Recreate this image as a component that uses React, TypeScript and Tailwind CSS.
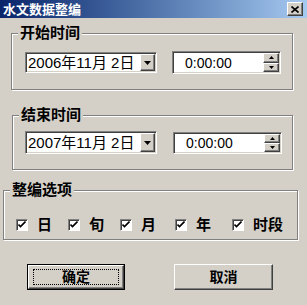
import type { ReactNode } from 'react';

const FONT = { fontFamily: '"Liberation Sans", "Noto Sans CJK SC", sans-serif' };

function Group({ label, className, children }: { label: string; className: string; children: ReactNode }) {
  return (
    <div className={`relative border border-[#808080] shadow-[inset_1px_1px_0_#fff,1px_1px_0_#fff] ${className}`}>
      {/* label sits over the etched top line */}
      <span className="absolute left-[6px] top-[-9px] bg-[#d4d0c8] px-[2px] text-[15px] font-bold leading-[16px] text-black">
        {label}
      </span>
      {children}
    </div>
  );
}

function DownArrow() {
  return (
    <svg width="7" height="4" viewBox="0 0 7 4">
      <path d="M0 0h7L3.5 4z" fill="#000" />
    </svg>
  );
}

function DateField({ value, className }: { value: string; className: string }) {
  return (
    <div
      className={`flex items-center border border-t-[#808080] border-l-[#808080] border-b-white border-r-white bg-white shadow-[inset_1px_1px_0_#404040,inset_-1px_-1px_0_#d4d0c8] ${className}`}
    >
      <span className="flex-1 pl-[2px] text-[15px] leading-none text-black">{value}</span>
      <div className="mr-[1px] flex h-[calc(100%-2px)] w-[15px] items-center justify-center border border-t-white border-l-white border-b-[#404040] border-r-[#404040] bg-[#d4d0c8] shadow-[inset_-1px_-1px_0_#808080]">
        <DownArrow />
      </div>
    </div>
  );
}

function SpinBtn({ up }: { up?: boolean }) {
  return (
    <div className="flex flex-1 items-center justify-center border border-t-white border-l-white border-b-[#404040] border-r-[#404040] bg-[#d4d0c8] shadow-[inset_-1px_-1px_0_#808080]">
      <svg width="5" height="3" viewBox="0 0 5 3">
        <path d={up ? 'M2.5 0L5 3H0z' : 'M0 0h5L2.5 3z'} fill="#000" />
      </svg>
    </div>
  );
}

function TimeField({ className }: { className: string }) {
  return (
    <div
      className={`flex items-stretch border border-t-[#808080] border-l-[#808080] border-b-white border-r-white bg-white shadow-[inset_1px_1px_0_#404040,inset_-1px_-1px_0_#d4d0c8] ${className}`}
    >
      <span className="flex flex-1 items-center pl-[12px] text-[14px] leading-none text-black">0:00:00</span>
      <div className="my-[1px] mr-[1px] flex w-[16px] flex-col">
        <SpinBtn up />
        <SpinBtn />
      </div>
    </div>
  );
}

function Check({ label }: { label: string }) {
  return (
    <div className="flex items-center gap-[9px]">
      <div className="flex h-[12px] w-[12px] items-center justify-center border border-t-[#808080] border-l-[#808080] border-b-white border-r-white bg-white shadow-[inset_1px_1px_0_#404040]">
        <svg width="8" height="7" viewBox="0 0 8 7">
          <path d="M0.5 3.5l2 2 5-5" stroke="#000" strokeWidth="1.6" fill="none" />
        </svg>
      </div>
      <span className="text-[15px] font-bold leading-none text-black">{label}</span>
    </div>
  );
}

export default function App() {
  return (
    <div className="flex h-[305px] w-[307px] flex-col overflow-hidden bg-[#d4d0c8]" style={FONT}>
      <div className="flex h-[18px] items-center justify-between bg-gradient-to-r from-[#0a246a] to-[#a6caf0] pl-[3px] pr-[4px]">
        <span className="text-[13px] font-bold leading-none text-white">水文数据整编</span>
        <div className="flex h-[14px] w-[16px] items-center justify-center border border-t-white border-l-white border-b-[#404040] border-r-[#404040] bg-[#d4d0c8] shadow-[inset_-1px_-1px_0_#808080]">
          <svg width="8" height="7" viewBox="0 0 8 7">
            <path d="M0.5 0.5l7 6M7.5 0.5l-7 6" stroke="#000" strokeWidth="1.6" />
          </svg>
        </div>
      </div>

      <Group label="开始时间" className="ml-[11px] mt-[15px] h-[57px] w-[282px]">
        <div className="flex items-center gap-[15px] pl-[13px] pt-[17px]">
          <DateField value="2006年11月 2日" className="h-[21px] w-[132px]" />
          <TimeField className="h-[23px] w-[109px]" />
        </div>
      </Group>

      <Group label="结束时间" className="ml-[12px] mt-[25px] h-[55px] w-[281px]">
        <div className="flex items-center gap-[16px] pl-[12px] pt-[15px]">
          <DateField value="2007年11月 2日" className="h-[23px] w-[132px]" />
          <TimeField className="h-[22px] w-[109px]" />
        </div>
      </Group>

      <Group label="整编选项" className="ml-[3px] mt-[20px] h-[50px] w-[295px]">
        <div className="flex items-center pl-[12px] pt-[26px]">
          <div className="w-[52px]"><Check label="日" /></div>
          <div className="w-[52px]"><Check label="旬" /></div>
          <div className="w-[55px]"><Check label="月" /></div>
          <div className="w-[57px]"><Check label="年" /></div>
          <Check label="时段" />
        </div>
      </Group>

      <div className="mt-[24px] flex gap-[49px] pl-[27px]">
        <div className="h-[26px] w-[98px] border border-black p-0">
          <div className="flex h-full w-full items-center justify-center border border-t-white border-l-white border-b-[#404040] border-r-[#404040] shadow-[inset_-1px_-1px_0_#808080]">
            <div className="flex h-[calc(100%-6px)] w-[calc(100%-8px)] items-center justify-center border border-dotted border-black">
              <span className="text-[14px] font-bold leading-none text-black">确定</span>
            </div>
          </div>
        </div>
        <div className="flex h-[26px] w-[99px] items-center justify-center border border-t-white border-l-white border-b-[#404040] border-r-[#404040] shadow-[inset_-1px_-1px_0_#808080]">
          <span className="text-[14px] font-bold leading-none text-black">取消</span>
        </div>
      </div>
    </div>
  );
}
